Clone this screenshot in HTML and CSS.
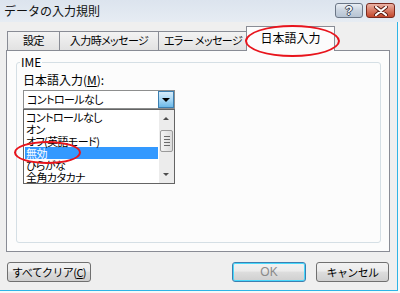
FILE: index.html
```html
<!DOCTYPE html>
<html lang="ja">
  <head>
    <meta charset="UTF-8" />
    <title>データの入力規則</title>
    <link rel="stylesheet" href="styles.css">
  </head>
  <body>
    <div class="window">
      <div class="titlebar">
        <span class="title">データの入力規則</span>
        <div class="caption-btns">
          <span class="cap-btn help">?</span>
          <span class="cap-btn close">
            <svg width="14" height="10" viewBox="0 0 14 10">
              <path d="M2 1 L12 9 M12 1 L2 9" stroke="#5a1c12" stroke-width="4" stroke-linecap="round" />
              <path d="M2 1 L12 9 M12 1 L2 9" stroke="#fff" stroke-width="2.2" stroke-linecap="round" />
            </svg>
          </span>
        </div>
      </div>

      <div class="tabs">
        <div class="tab tab-1">設定</div>
        <div class="tab tab-2">入力時メッセージ</div>
        <div class="tab tab-3">エラー メッセージ</div>
        <div class="tab tab-4 active">日本語入力</div>
      </div>

      <div class="panel">
        <div class="group">
          <span class="legend">IME</span>
          <p class="field-label">日本語入力(<u>M</u>):</p>
          <div class="combo">
            <span class="combo-value">コントロールなし</span>
            <span class="combo-arrow"></span>
          </div>
          <div class="listbox">
            <ul class="items">
              <li>コントロールなし</li>
              <li>オン</li>
              <li>オフ(英語モード)</li>
              <li class="selected">無効</li>
              <li>ひらがな</li>
              <li>全角カタカナ</li>
            </ul>
            <div class="scrollbar">
              <span class="sb-btn up"></span>
              <span class="sb-thumb">
                <i></i><i></i><i></i><i></i>
              </span>
              <span class="sb-btn down"></span>
            </div>
          </div>
        </div>
      </div>

      <div class="footer">
        <button class="btn btn-clear">すべてクリア(<u>C</u>)</button>
        <div class="footer-right">
          <button class="btn btn-ok">OK</button>
          <button class="btn btn-cancel">キャンセル</button>
        </div>
      </div>

      <!-- red marks drawn over the screenshot -->
      <div class="mark mark-tab"></div>
      <div class="mark mark-item"></div>
    </div>
  </body>
</html>
```

FILE: styles.css
```css
* {
  box-sizing: border-box;
}

body {
  margin: 0;
  font-family: "Noto Sans CJK JP", "Liberation Sans", sans-serif;
  font-size: 12px;
  color: #000;
}

.window {
  position: relative;
  width: 400px;
  height: 293px;
  background: #efefef;
  overflow: hidden;
  box-shadow: inset -2px -2px 0 #f7f7f7, inset -3px -3px 0 #2fb4e6;
  font-feature-settings: "palt";
}

.titlebar {
  height: 22px;
  display: flex;
  align-items: center;
  justify-content: space-between;
  padding: 0 5px 0 4px;
  background: linear-gradient(#dce4ee, #e6ecf3);
}

.title {
  font-size: 12px;
  line-height: 14px;
  font-feature-settings: normal;
  color: #111;
}

.caption-btns {
  display: flex;
  gap: 3px;
  align-self: flex-start;
  margin-top: 3px;
}

.cap-btn {
  height: 15px;
  display: flex;
  align-items: center;
  justify-content: center;
  border: 1px solid #6b7686;
  border-radius: 3px;
}

.help {
  width: 28px;
  background: linear-gradient(#e9eef4 0%, #c9d3df 50%, #b6c3d3 100%);
  color: #fff;
  font-family: "Liberation Sans", sans-serif;
  font-weight: bold;
  font-size: 12px;
  line-height: 12px;
  text-shadow: 1px 0 0 #3b4658, -1px 0 0 #3b4658, 0 1px 0 #3b4658, 0 -1px 0 #3b4658;
}

.close {
  width: 29px;
  border-color: #7a2a1e;
  background: linear-gradient(#eab3a6 0%, #d87b66 50%, #c2472c 100%);
}

/* narrow kana text, close to the old UI font */
.tab,
.combo-value,
.items li,
.btn {
  font-size: 11px;
  letter-spacing: -0.6px;
}

.tabs {
  display: flex;
  align-items: flex-end;
  height: 28px;
  padding-left: 7px;
}

.tab {
  height: 19px;
  margin-left: -1px;
  border: 1px solid #898c95;
  border-bottom: none;
  background: linear-gradient(#f3f3f3, #e2e2e2);
  text-align: center;
  line-height: 17px;
  white-space: nowrap;
  overflow: hidden;
}

.tab-1 {
  margin-left: 0;
  width: 53px;
}

.tab-2 {
  width: 100px;
}

.tab-3 {
  width: 90px;
}

.tab.active {
  position: relative;
  z-index: 1;
  width: 89px;
  height: 25px;
  margin-left: -2px;
  margin-bottom: -1px;
  background: #fcfcfc;
  font-size: 12px;
  letter-spacing: 0;
  line-height: 22px;
}

.panel {
  width: 384px;
  height: 202px;
  margin-left: 6px;
  padding: 11px 8px 0 9px;
  border: 1px solid #898c95;
  background: #fcfcfc;
}

.group {
  height: 181px;
  padding-left: 6px;
  border: 1px solid #d5dfe5;
  border-radius: 3px;
}

.legend {
  display: block;
  width: fit-content;
  margin: -8px 0 0 -3px;
  padding: 0 1px;
  line-height: 14px;
  background: #fcfcfc;
}

.field-label {
  margin: 4px 0 0;
  line-height: 14px;
}

.combo {
  display: flex;
  width: 152px;
  height: 19px;
  margin-top: 3px;
  border: 1px solid #8e8f8f;
  background: #fff;
}

.combo-value {
  flex: 1;
  padding-left: 3px;
  line-height: 17px;
}

.combo-arrow {
  width: 16px;
  border: 1px solid #3c7fb1;
  background: linear-gradient(#d7ecfa 0%, #a9d8f5 50%, #6cb9e8 100%);
  position: relative;
}

.combo-arrow::after {
  content: "";
  position: absolute;
  left: 3px;
  top: 6px;
  border-left: 4px solid transparent;
  border-right: 4px solid transparent;
  border-top: 4px solid #000;
}

.listbox {
  display: flex;
  width: 152px;
  height: 75px;
  border: 1px solid #646464;
  background: #fff;
}

.items {
  flex: 1;
  list-style: none;
  margin: 0;
  padding: 1px 1px 0;
}

.items li {
  height: 12px;
  line-height: 12px;
  padding-left: 1px;
  white-space: nowrap;
}

.items li.selected {
  background: #3399ff;
  color: #fff;
}

.scrollbar {
  width: 15px;
  display: flex;
  flex-direction: column;
  align-items: center;
  background: #ececec;
}

.sb-btn {
  position: relative;
  width: 15px;
  height: 17px;
}

.sb-btn::after {
  content: "";
  position: absolute;
  left: 4px;
  border-left: 3px solid transparent;
  border-right: 3px solid transparent;
}

.sb-btn.up::after {
  top: 7px;
  border-bottom: 3px solid #4d4d4d;
}

.sb-btn.down {
  margin-top: auto;
}

.sb-btn.down::after {
  top: 7px;
  border-top: 3px solid #4d4d4d;
}

.sb-thumb {
  width: 13px;
  height: 22px;
  margin-top: 3px;
  display: flex;
  flex-direction: column;
  justify-content: center;
  align-items: center;
  gap: 2px;
  border: 1px solid #9a9a9a;
  border-radius: 2px;
  background: linear-gradient(to right, #f4f4f4, #dcdcdc);
}

.sb-thumb i {
  width: 6px;
  height: 1px;
  background: #6a6a6a;
}

.footer {
  display: flex;
  margin-top: 10px;
  padding: 0 11px 0 7px;
}

.footer-right {
  display: flex;
  gap: 10px;
  margin-left: auto;
}

.btn {
  height: 20px;
  padding: 0;
  font-family: inherit;
  line-height: 16px;
  white-space: nowrap;
  color: #000;
  border: 1px solid #707070;
  border-radius: 3px;
  background: linear-gradient(#f2f2f2 0%, #ebebeb 45%, #dddddd 50%, #cfcfcf 100%);
}

.btn-clear {
  width: 84px;
}

.btn-ok {
  width: 74px;
  color: #8a8a8a;
  font-family: "Liberation Sans", sans-serif;
  font-size: 12px;
  letter-spacing: 0;
  border-color: #3c7fb1;
  box-shadow: inset 0 0 0 1px #48d8fb;
}

.btn-cancel {
  width: 73px;
}

.mark {
  position: absolute;
  z-index: 5;
  border: 2px solid #e8141c;
  border-radius: 50%;
}

.mark-tab {
  left: 245px;
  top: 25px;
  width: 95px;
  height: 32px;
}

.mark-item {
  left: 14px;
  top: 141px;
  width: 67px;
  height: 23px;
}
```
